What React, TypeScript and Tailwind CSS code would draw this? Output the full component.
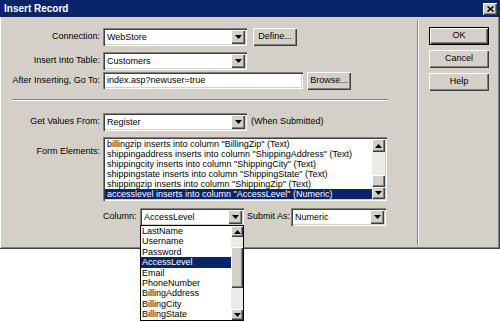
import React from 'react';

const sunken =
    'bg-white shadow-[inset_1px_1px_0_#808080,inset_2px_2px_0_#404040,inset_-1px_-1px_0_#ffffff,inset_-2px_-2px_0_#d4d0c8]';
const raised =
    'bg-[#d4d0c8] shadow-[inset_1px_1px_0_#ffffff,inset_-1px_-1px_0_#404040,inset_-2px_-2px_0_#808080]';

const Arrow = ({ up = false }: { up?: boolean }) => (
    <svg width="7" height="4" viewBox="0 0 7 4" className={up ? 'rotate-180' : ''}>
        <path d="M0 0h7L3.5 4z" fill="#000" />
    </svg>
);

const ArrowBtn = ({ up = false, size }: { up?: boolean; size: string }) => (
    <div className={`${size} ${raised} flex items-center justify-center shrink-0`}>
        <Arrow up={up} />
    </div>
);

const Combo = ({ value, width, height = 'h-[18px]' }: { value: string; width: string; height?: string }) => (
    <div className={`${width} ${height} ${sunken} flex items-center p-[2px] shrink-0`}>
        <span className="flex-1 pl-[2px] leading-none truncate">{value}</span>
        <ArrowBtn size="w-[14px] h-full" />
    </div>
);

const Button = ({ label, width }: { label: string; width: string }) => (
    <div className={`${width} h-[18px] ${raised} flex items-center justify-center shrink-0`}>{label}</div>
);

const formElements = [
    'billingzip inserts into column "BillingZip" (Text)',
    'shippingaddress inserts into column "ShippingAddress" (Text)',
    'shippingcity inserts into column "ShippingCity" (Text)',
    'shippingstate inserts into column "ShippingState" (Text)',
    'shippingzip inserts into column "ShippingZip" (Text)',
    'accesslevel inserts into column "AccessLevel" (Numeric)',
];

const columns = [
    'LastName',
    'Username',
    'Password',
    'AccessLevel',
    'Email',
    'PhoneNumber',
    'BillingAddress',
    'BillingCity',
    'BillingState',
];

export default function App() {
    return (
        <div className="relative w-[500px] h-[321px] bg-white text-[9px] text-black font-['Liberation_Sans',Arial,sans-serif] overflow-hidden">
            {/* dialog */}
            <div className="w-[500px] h-[249px] bg-[#d4d0c8] flex flex-col shadow-[inset_-1px_-1px_0_#404040,inset_1px_0_0_#ffffff,inset_-2px_-2px_0_#808080]">
                {/* title bar */}
                <div className="h-[17px] bg-[#0a246a] flex items-center pl-[4px] pr-[3px] shrink-0">
                    <span className="text-white font-bold text-[10px] leading-none">Insert Record</span>
                    <div className={`ml-auto w-[14px] h-[12px] ${raised} flex items-center justify-center`}>
                        <svg width="7" height="6" viewBox="0 0 7 6">
                            <path d="M0.5 0.5L6.5 5.5M6.5 0.5L0.5 5.5" stroke="#000" strokeWidth="1.6" />
                        </svg>
                    </div>
                </div>

                <div className="flex flex-1">
                    {/* left panel */}
                    <div className="w-[417px] flex flex-col">
                        <div className="flex items-center gap-[3px] mt-[11px] h-[18px]">
                            <span className="w-[100px] text-right">Connection:</span>
                            <Combo value="WebStore" width="w-[144px]" />
                            <div className="ml-[3px]">
                                <Button label="Define..." width="w-[44px]" />
                            </div>
                        </div>
                        <div className="flex items-center gap-[3px] mt-[6px] h-[18px]">
                            <span className="w-[100px] text-right">Insert Into Table:</span>
                            <Combo value="Customers" width="w-[144px]" />
                        </div>
                        <div className="flex items-center gap-[3px] mt-[1px] h-[19px]">
                            <span className="w-[100px] text-right">After Inserting, Go To:</span>
                            <div className={`w-[200px] h-[17px] ${sunken} flex items-center pl-[4px]`}>
                                index.asp?newuser=true
                            </div>
                            <div className="ml-[1px]">
                                <Button label="Browse..." width="w-[44px]" />
                            </div>
                        </div>

                        <div className="ml-[12px] mt-[9px] w-[376px] h-[2px] border-t border-t-[#808080] border-b border-b-white" />

                        <div className="flex items-center gap-[3px] mt-[12px] h-[18px]">
                            <span className="w-[100px] text-right">Get Values From:</span>
                            <Combo value="Register" width="w-[144px]" />
                            <span className="ml-[1px]">(When Submitted)</span>
                        </div>

                        <div className="flex items-start gap-[3px] mt-[6px]">
                            <span className="w-[100px] text-right pt-[8px]">Form Elements:</span>
                            <div className={`w-[284px] h-[64px] ${sunken} p-[2px] flex`}>
                                <div className="flex-1 flex flex-col">
                                    {formElements.map((item, i) => (
                                        <div
                                            key={item}
                                            className={`h-[10px] leading-[10px] pl-[2px] whitespace-nowrap overflow-hidden ${
                                                i === formElements.length - 1 ? 'bg-[#0a246a] text-white' : ''
                                            }`}
                                        >
                                            {item}
                                        </div>
                                    ))}
                                </div>
                                <div className="w-[13px] flex flex-col bg-[#eceae6]">
                                    <ArrowBtn up size="w-[13px] h-[13px]" />
                                    <div className="flex-1" />
                                    <div className={`h-[12px] ${raised}`} />
                                    <ArrowBtn size="w-[13px] h-[12px]" />
                                </div>
                            </div>
                        </div>

                        <div className="flex items-center mt-[7px] h-[18px] pl-[103px]">
                            <span className="w-[37px]">Column:</span>
                            <Combo value="AccessLevel" width="w-[104px]" />
                            <span className="w-[47px] pl-[3px]">Submit As:</span>
                            <Combo value="Numeric" width="w-[95px]" />
                        </div>
                    </div>

                    {/* vertical separator */}
                    <div className="my-[3px] mb-[4px] w-[2px] border-l border-l-[#808080] border-r border-r-white" />

                    {/* right buttons */}
                    <div className="flex flex-col gap-[5px] pt-[10px] pl-[10px]">
                        <div className="w-[60px] h-[18px] border border-black">
                            <div className={`w-full h-full ${raised} flex items-center justify-center`}>OK</div>
                        </div>
                        <Button label="Cancel" width="w-[60px]" />
                        <Button label="Help" width="w-[60px]" />
                    </div>
                </div>
            </div>

            {/* open dropdown list of the Column combo */}
            <div className="absolute left-[140px] top-[225px] w-[104px] h-[96px] bg-white border border-black flex">
                <div className="flex-1 flex flex-col">
                    {columns.map((c) => (
                        <div
                            key={c}
                            className={`h-[10.4px] leading-[10.4px] pl-[1px] whitespace-nowrap ${
                                c === 'AccessLevel' ? 'bg-[#0a246a] text-white' : ''
                            }`}
                        >
                            {c}
                        </div>
                    ))}
                </div>
                <div className="w-[12px] flex flex-col bg-[#eceae6]">
                    <ArrowBtn up size="w-[12px] h-[11px]" />
                    <div className="h-[10px]" />
                    <div className={`h-[41px] ${raised}`} />
                    <div className="flex-1" />
                    <ArrowBtn size="w-[12px] h-[11px]" />
                </div>
            </div>
        </div>
    );
}
